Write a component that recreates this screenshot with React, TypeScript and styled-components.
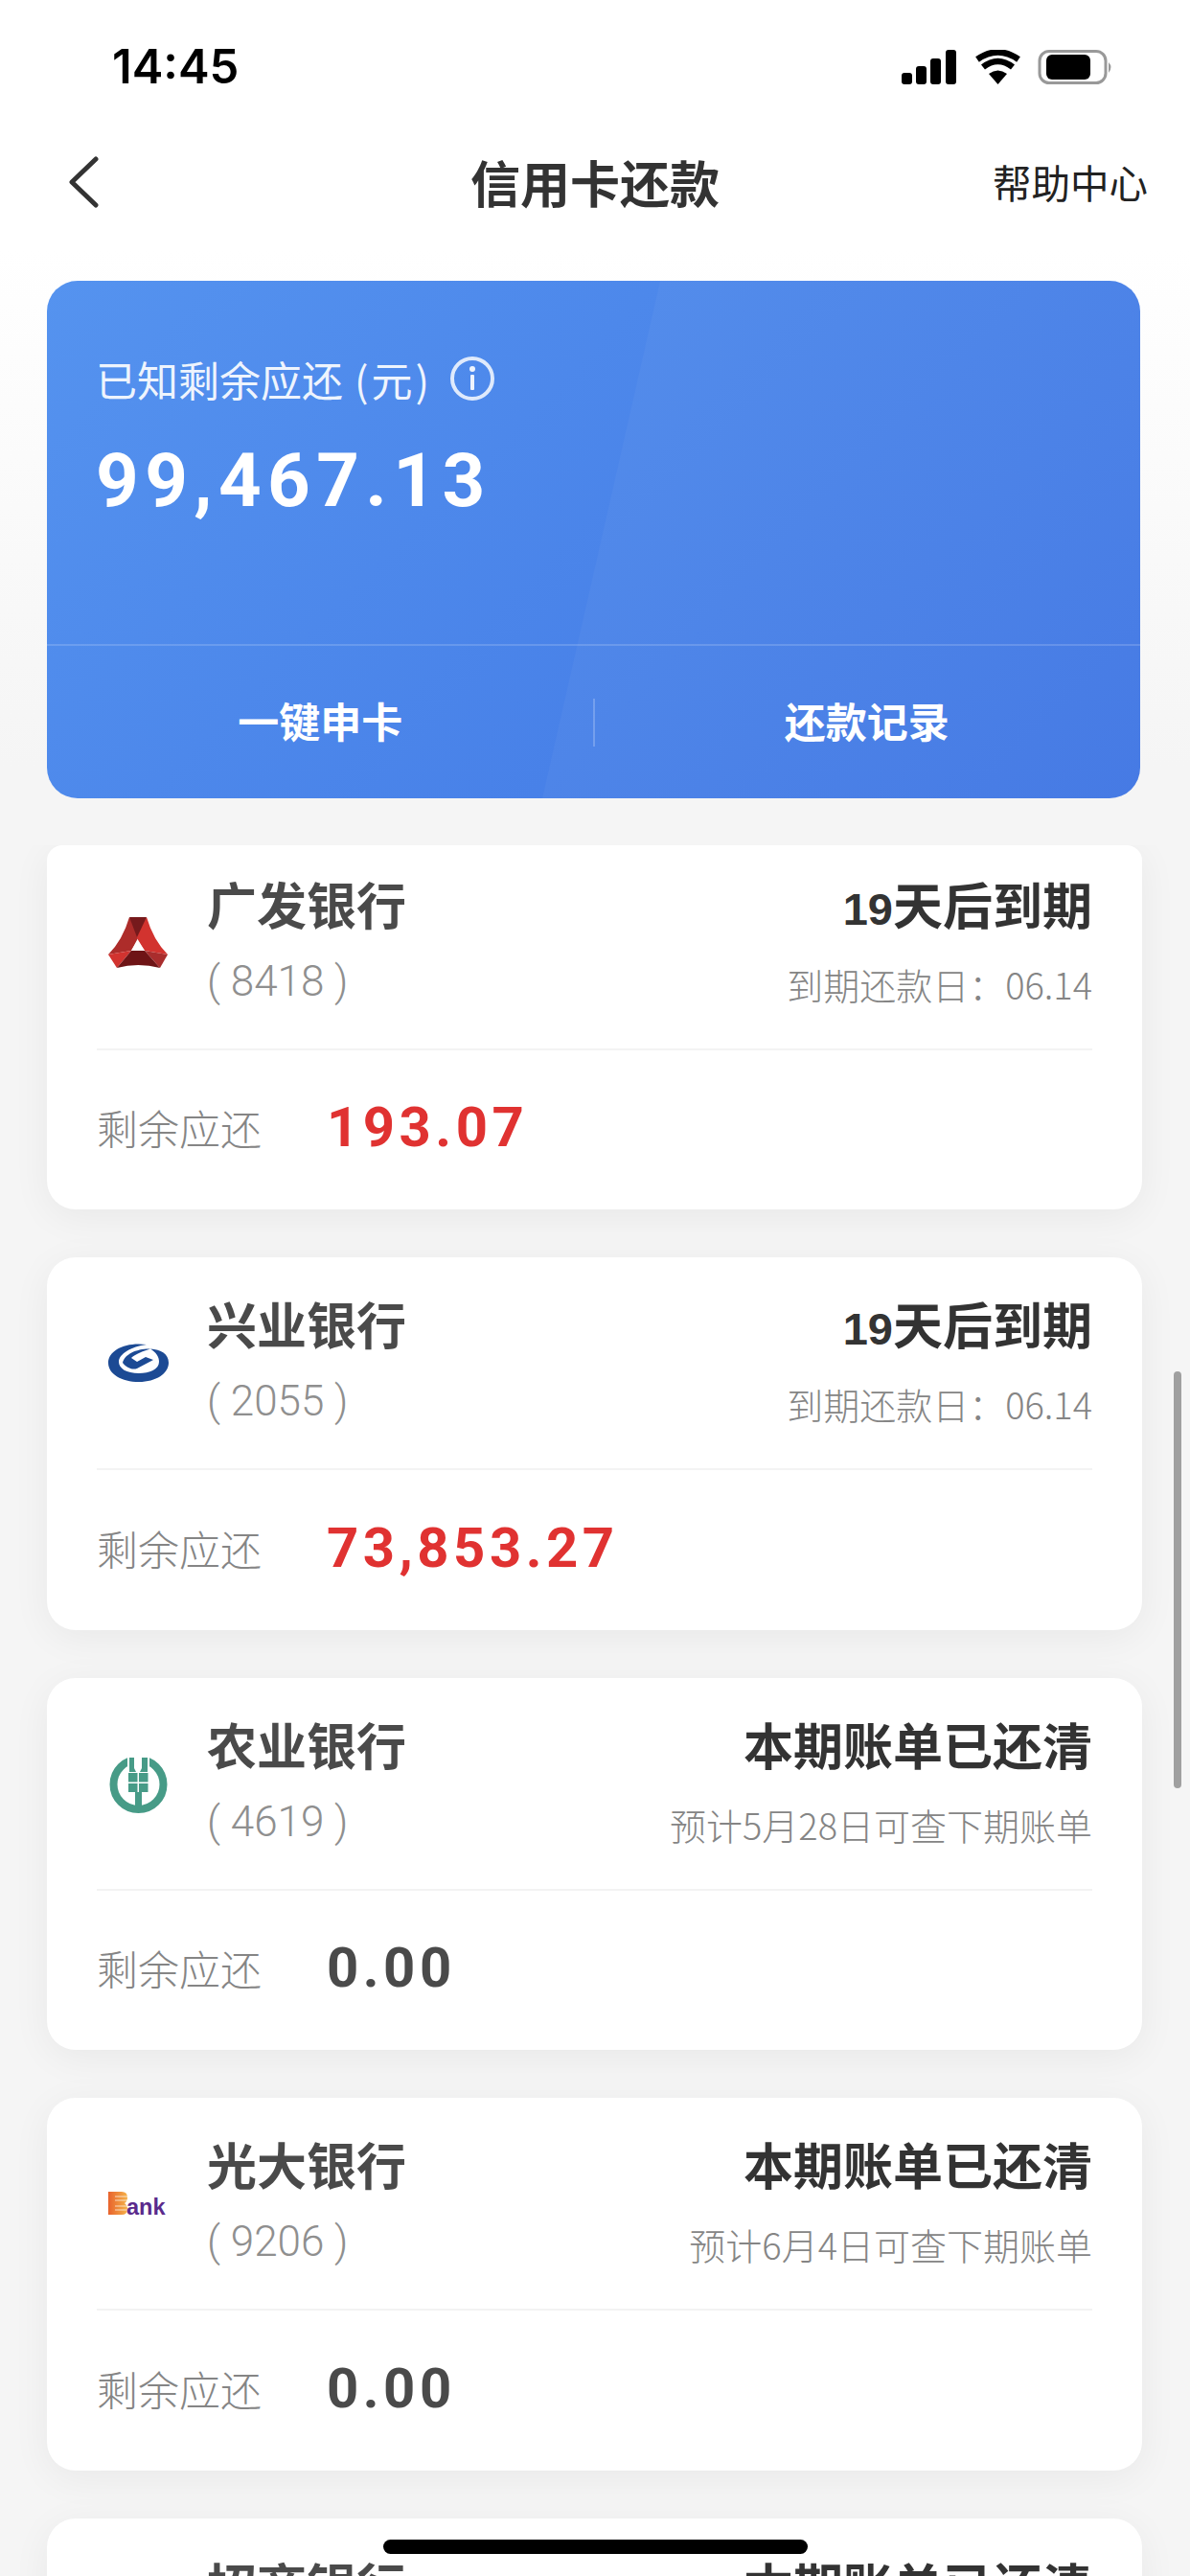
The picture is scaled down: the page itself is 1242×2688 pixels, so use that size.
import React from "react";
import styled, { createGlobalStyle } from "styled-components";

const GlobalStyle = createGlobalStyle`
  html, body {
    margin: 0;
    padding: 0;
    background: #f5f5f5;
  }
  * {
    box-sizing: border-box;
  }
`;

const FONT = `"Noto Sans CJK SC", "Noto Sans", sans-serif`;
const NUM_FONT = `Roboto, "Noto Sans CJK SC", sans-serif`;

const Page = styled.div`
  position: relative;
  width: 1242px;
  height: 2688px;
  overflow: hidden;
  font-family: ${FONT};
  background: linear-gradient(180deg, #ffffff 0px, #ffffff 260px, #f5f5f5 800px);
`;

const StatusBar = styled.div`
  height: 130px;
  padding: 44px 80px 0 117px;
  display: flex;
  justify-content: space-between;
  align-items: flex-start;
`;

const Time = styled.div`
  font-family: Inter, sans-serif;
  font-weight: 600;
  font-size: 49px;
  line-height: 52px;
  color: #000;
`;

const NavBar = styled.div`
  position: relative;
  height: 120px;
  padding: 0 44px 0 70px;
  display: flex;
  align-items: center;
  justify-content: space-between;
`;

const NavTitle = styled.div`
  position: absolute;
  left: 0;
  right: 0;
  text-align: center;
  font-size: 52px;
  font-weight: 700;
  line-height: 70px;
  color: #333;
`;

const NavLink = styled.div`
  font-size: 40.5px;
  line-height: 54px;
  color: #222;
`;

const HeroCard = styled.div`
  position: relative;
  overflow: hidden;
  margin: 43px 52px 0 49px;
  height: 540px;
  border-radius: 32px;
  background: linear-gradient(135deg, #5593ef 0%, #4076e4 100%);
  color: #fff;
  display: flex;
  flex-direction: column;
`;

const HeroSheen = styled.div`
  position: absolute;
  inset: 0;
  background: rgba(255, 255, 255, 0.035);
  clip-path: polygon(640px 0, 100% 0, 100% 100%, 517px 100%);
`;

const HeroTop = styled.div`
  position: relative;
  height: 381px;
  padding: 74px 0 0 51px;
  border-bottom: 2px solid rgba(255, 255, 255, 0.16);
`;

const HeroLabel = styled.div`
  display: flex;
  align-items: center;
  gap: 19px;
  font-size: 43px;
  line-height: 56px;
  color: rgba(255, 255, 255, 0.92);
`;

const HeroUnit = styled.span`
  margin-left: 12px;
  letter-spacing: 3px;
`;

const HeroAmount = styled.div`
  margin-top: 33px;
  font-family: ${NUM_FONT};
  font-weight: 700;
  font-size: 78px;
  line-height: 92px;
  letter-spacing: 6.4px;
`;

const HeroActions = styled.div`
  position: relative;
  flex: 1;
  padding-bottom: 6px;
  display: grid;
  grid-template-columns: 1fr 1fr;
  align-items: center;
`;

const HeroAction = styled.div`
  text-align: center;
  font-size: 43px;
  font-weight: 700;
  line-height: 58px;
`;

const ActionDivider = styled.div`
  position: absolute;
  left: 570px;
  top: 55px;
  width: 2px;
  height: 50px;
  background: rgba(255, 255, 255, 0.22);
`;

const ListClip = styled.div`
  margin-top: 49px;
  height: 1900px;
  overflow: hidden;
`;

const List = styled.div`
  padding: 0 50px 0 49px;
  display: flex;
  flex-direction: column;
  gap: 50px;
`;

// the first card is scrolled under the top of the list
const Card = styled.div<{ $scrolled?: boolean }>`
  height: ${(p) => (p.$scrolled ? "380px" : "388.5px")};
  padding: 0 52px;
  border-radius: ${(p) => (p.$scrolled ? "16px 16px 30px 30px" : "30px")};
  background: #fff;
  box-shadow: 0 8px 40px rgba(0, 0, 0, 0.055);
`;

const CardHead = styled.div<{ $scrolled?: boolean }>`
  position: relative;
  top: ${(p) => (p.$scrolled ? "-8.5px" : "0")};
  height: 222px;
  padding-top: 34px;
  display: flex;
  align-items: flex-start;
  border-bottom: 2px solid #f3f3f3;
`;

const LogoBox = styled.div`
  width: 64px;
  height: 64px;
  margin: 44px 40px 0 11px;
  flex: none;
  display: flex;
  align-items: center;
  justify-content: center;
`;

const Names = styled.div`
  flex: 1;
`;

const BankName = styled.div`
  font-size: 52px;
  font-weight: 700;
  line-height: 70px;
  color: #4a4a4a;
`;

const CardTail = styled.div`
  margin-top: 17px;
  font-family: ${NUM_FONT};
  font-weight: 300;
  font-size: 44px;
  line-height: 58px;
  color: #8f8f8f;
`;

const Status = styled.div`
  text-align: right;
`;

const StatusTitle = styled.div`
  height: 70px;
  font-size: 52px;
  font-weight: 700;
  line-height: 70px;
  color: #333;
`;

const StatusDays = styled.span`
  font-family: "Liberation Sans", sans-serif;
  font-size: 47px;
`;

const StatusNote = styled.div`
  margin-top: 20px;
  font-size: 38px;
  font-weight: 300;
  line-height: 58px;
  color: #858585;
`;

const CardFoot = styled.div<{ $scrolled?: boolean }>`
  position: relative;
  top: ${(p) => (p.$scrolled ? "-8.5px" : "0")};
  height: 166px;
  padding-bottom: 5px;
  display: flex;
  align-items: center;
`;

const FootLabel = styled.div`
  width: 240px;
  font-size: 43px;
  font-weight: 300;
  line-height: 58px;
  color: #858585;
`;

const FootAmount = styled.div<{ $due: boolean }>`
  font-family: ${NUM_FONT};
  font-weight: 700;
  font-size: 58px;
  line-height: 70px;
  letter-spacing: 4.5px;
  color: ${(p) => (p.$due ? "#e03231" : "#4a4a4a")};
`;

const ScrollThumb = styled.div`
  position: absolute;
  left: 1225px;
  top: 1431px;
  width: 8px;
  height: 435px;
  border-radius: 4px;
  background: #a0a0a0;
`;

const HomeBar = styled.div`
  position: absolute;
  left: 400px;
  top: 2650px;
  width: 443px;
  height: 15px;
  border-radius: 8px;
  background: #000;
`;

const StatusIcons = () => (
  <svg width="221" height="37" viewBox="0 0 221 37" style={{ marginTop: 8 }}>
    <g fill="#000">
      <rect x="0" y="24" width="11" height="12" rx="3" />
      <rect x="15" y="17" width="11" height="19" rx="3" />
      <rect x="30" y="9" width="11" height="27" rx="3" />
      <rect x="46" y="0" width="11" height="36" rx="3" />
      <path d="M100.5 36 L91 25 Q100.5 18 110 25 Z" />
    </g>
    <g fill="none" stroke="#000" strokeWidth="6.5">
      <path d="M85 18 Q100.5 6 116 18" />
      <path d="M79 10 Q100.5 -5 122 10" />
    </g>
    <rect x="144" y="1.5" width="69" height="33" rx="10" fill="none" stroke="#999" strokeWidth="3" />
    <rect x="151" y="5" width="46" height="26" rx="6" fill="#000" />
    <path d="M216 13 Q221 18 216 24 Z" fill="#999" />
  </svg>
);

const InfoIcon = () => (
  <svg width="46" height="46" viewBox="0 0 46 46">
    <circle cx="23" cy="23" r="21" fill="none" stroke="rgba(255,255,255,0.82)" strokeWidth="4" />
    <circle cx="23" cy="13" r="3" fill="rgba(255,255,255,0.9)" />
    <rect x="21" y="19" width="4" height="16" rx="1" fill="rgba(255,255,255,0.9)" />
  </svg>
);

const GuangfaLogo = () => (
  <svg width="62" height="53" viewBox="0 0 62 53">
    <path d="M22 0 Q15 24 0 39 L24 35 L31 22 L30 12 Z" fill="#ad2c2a" />
    <path d="M40 0 Q47 24 62 39 L38 35 L30 22 L31 12 Z" fill="#d2332f" />
    <path d="M22 0 H40 L30 21 Z" fill="#761a1c" />
    <path d="M0 39 L24 35 L9 53 Z" fill="#d2332f" />
    <path d="M62 39 L38 35 L54 53 Z" fill="#a92d2d" />
    <path d="M24 35 H38 L54 53 Q31 47 9 53 Z" fill="#6e1416" />
    <path d="M30.5 24 L38 35 H24 Z" fill="#fff" />
  </svg>
);

const XingyeLogo = () => (
  <svg width="63" height="40" viewBox="0 0 63 40">
    <path
      fill="#1c4a94"
      d="M40 1 C18 -2 0 7 0 20 C0 32 14 40 32 40 C50 40 63 31 63 20 C63 11 55 6 44 5.5 C50 9 53 14 53 19 C53 27 43 31 32 31 C19 31 11 26 11 19 C11 11 24 3 40 1 Z"
    />
    <path
      fill="#1c4a94"
      d="M44 5.5 C30 5 17 11 15 20 C18 24 24 28 30 26 L47 17 L39 14 L30 19 L24 15 C28 11 36 8 44 5.5 Z"
    />
  </svg>
);

const NongyeLogo = () => (
  <svg width="63" height="63" viewBox="0 0 63 63">
    <circle cx="31.5" cy="33" r="26" fill="none" stroke="#479b87" strokeWidth="8" />
    <rect x="20" y="0" width="23" height="20" fill="#fff" />
    <path d="M22 5 H27 V16 L29 20 H33 L35 16 V5 H41 V20 H22 Z" fill="#479b87" />
    <rect x="21" y="21" width="9.5" height="9.5" fill="#479b87" />
    <rect x="32" y="21" width="9.5" height="9.5" fill="#479b87" />
    <rect x="21" y="32" width="9.5" height="9" fill="#479b87" />
    <rect x="32" y="32" width="9.5" height="9" fill="#479b87" />
    <rect x="28" y="41" width="7" height="20" fill="#479b87" />
  </svg>
);

const GuangdaLogo = () => (
  <svg width="64" height="36" viewBox="0 -5 64 36">
    <defs>
      <linearGradient id="gdB" x1="0" y1="0" x2="1" y2="0">
        <stop offset="0" stopColor="#e8622c" />
        <stop offset="1" stopColor="#f5b24a" />
      </linearGradient>
    </defs>
    <path d="M1 1 H15 Q21 1 21 7 Q21 11 18 13 Q21 15 21 19 Q21 25 15 25 H1 Z" fill="url(#gdB)" />
    <g stroke="#fff" strokeWidth="1" opacity="0.7">
      <path d="M8 6 H21" />
      <path d="M8 10 H21" />
      <path d="M8 16 H21" />
      <path d="M8 20 H21" />
    </g>
    <text x="20" y="25" fontFamily="'Liberation Sans', sans-serif" fontWeight="700" fontSize="23.5" fill="#5a2a8c">
      ank
    </text>
  </svg>
);

type Bank = {
  name: string;
  tail?: string;
  logo?: React.ReactNode;
  status: React.ReactNode;
  note?: string;
  amount?: string;
  due?: boolean;
  scrolled?: boolean;
};

const dueIn19 = (
  <>
    <StatusDays>19</StatusDays>天后到期
  </>
);

const banks: Bank[] = [
  { name: "广发银行", tail: "( 8418 )", logo: <GuangfaLogo />, status: dueIn19, note: "到期还款日：06.14", amount: "193.07", due: true, scrolled: true },
  { name: "兴业银行", tail: "( 2055 )", logo: <XingyeLogo />, status: dueIn19, note: "到期还款日：06.14", amount: "73,853.27", due: true },
  { name: "农业银行", tail: "( 4619 )", logo: <NongyeLogo />, status: "本期账单已还清", note: "预计5月28日可查下期账单", amount: "0.00" },
  { name: "光大银行", tail: "( 9206 )", logo: <GuangdaLogo />, status: "本期账单已还清", note: "预计6月4日可查下期账单", amount: "0.00" },
  { name: "招商银行", status: "本期账单已还清" },
];

export default function App() {
  return (
    <Page>
      <GlobalStyle />
      <StatusBar>
        <Time>14:45</Time>
        <StatusIcons />
      </StatusBar>
      <NavBar>
        <svg width="34" height="54" viewBox="0 0 34 54">
          <path d="M30 3 L5 27 L30 51" fill="none" stroke="#333" strokeWidth="5" strokeLinecap="round" strokeLinejoin="round" />
        </svg>
        <NavTitle>信用卡还款</NavTitle>
        <NavLink>帮助中心</NavLink>
      </NavBar>
      <HeroCard>
        <HeroSheen />
        <HeroTop>
          <HeroLabel>
            <span>
              已知剩余应还<HeroUnit>(元)</HeroUnit>
            </span>
            <InfoIcon />
          </HeroLabel>
          <HeroAmount>99,467.13</HeroAmount>
        </HeroTop>
        <HeroActions>
          <HeroAction>一键申卡</HeroAction>
          <HeroAction>还款记录</HeroAction>
          <ActionDivider />
        </HeroActions>
      </HeroCard>
      <ListClip>
        <List>
          {banks.map((b) => (
            <Card key={b.name} $scrolled={b.scrolled}>
              <CardHead $scrolled={b.scrolled}>
                <LogoBox>{b.logo}</LogoBox>
                <Names>
                  <BankName>{b.name}</BankName>
                  {b.tail && <CardTail>{b.tail}</CardTail>}
                </Names>
                <Status>
                  <StatusTitle>{b.status}</StatusTitle>
                  {b.note && <StatusNote>{b.note}</StatusNote>}
                </Status>
              </CardHead>
              {b.amount && (
                <CardFoot $scrolled={b.scrolled}>
                  <FootLabel>剩余应还</FootLabel>
                  <FootAmount $due={!!b.due}>{b.amount}</FootAmount>
                </CardFoot>
              )}
            </Card>
          ))}
        </List>
      </ListClip>
      <ScrollThumb />
      <HomeBar />
    </Page>
  );
}
